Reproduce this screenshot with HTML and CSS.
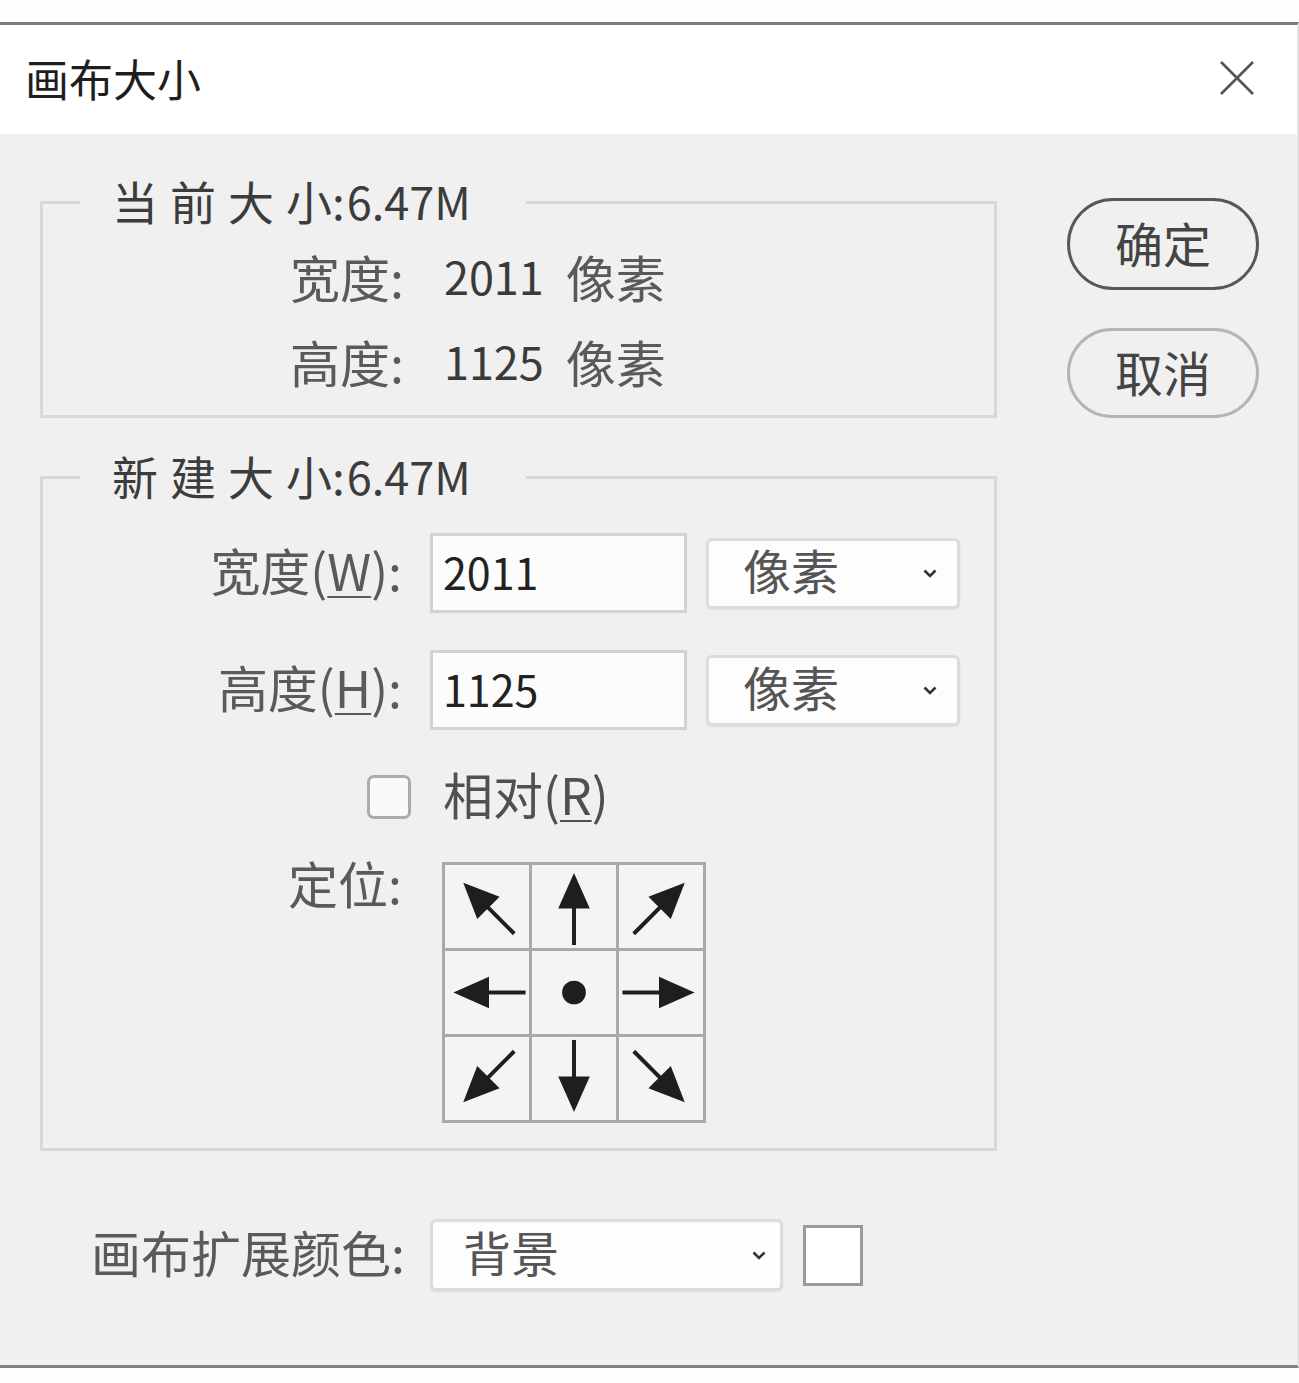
FILE: index.html
```html
<!DOCTYPE html>
<html lang="zh-CN">
<head>
  <meta charset="UTF-8">
  <meta name="viewport" content="width=device-width, initial-scale=1.0">
  <title>画布大小</title>
  <link rel="stylesheet" href="styles.css">
</head>
<body>

  <!-- arrow shape used by the anchor grid -->
  <svg class="defs" width="0" height="0">
    <defs>
      <g id="arrow">
        <polygon points="42,8 26,44 58,44" />
        <rect x="40" y="38" width="4" height="43" />
      </g>
    </defs>
  </svg>

  <div class="top-strip"></div>

  <div class="dialog">
    <!-- Title bar -->
    <div class="titlebar">
      <span class="title">画布大小</span>
      <svg class="close" viewBox="0 0 38 38" width="38" height="38">
        <line x1="3" y1="3" x2="35" y2="35" />
        <line x1="35" y1="3" x2="3" y2="35" />
      </svg>
    </div>

    <div class="content">
      <div class="main">
        <!-- Current size -->
        <fieldset class="group group-current">
          <legend><span class="cjk-wide">当前大</span>小:<span class="size">6.47M</span></legend>
          <div class="info-row">
            <span class="label">宽度:</span>
            <span class="value">2011</span>
            <span class="unit">像素</span>
          </div>
          <div class="info-row">
            <span class="label">高度:</span>
            <span class="value">1125</span>
            <span class="unit">像素</span>
          </div>
        </fieldset>

        <!-- New size -->
        <fieldset class="group group-new">
          <legend><span class="cjk-wide">新建大</span>小:<span class="size">6.47M</span></legend>

          <div class="field-row">
            <label class="field-label" for="width">宽度(<u>W</u>):</label>
            <div class="text-input" id="width">2011</div>
            <div class="select unit-select">
              <span>像素</span>
              <svg class="chevron" viewBox="0 0 14 9" width="14" height="9"><polyline points="1.5,1.5 7,7 12.5,1.5" /></svg>
            </div>
          </div>

          <div class="field-row row-height">
            <label class="field-label" for="height">高度(<u>H</u>):</label>
            <div class="text-input" id="height">1125</div>
            <div class="select unit-select">
              <span>像素</span>
              <svg class="chevron" viewBox="0 0 14 9" width="14" height="9"><polyline points="1.5,1.5 7,7 12.5,1.5" /></svg>
            </div>
          </div>

          <div class="check-row">
            <span class="checkbox"></span>
            <span class="check-label">相对(<u>R</u>)</span>
          </div>

          <div class="anchor-row">
            <span class="field-label anchor-label">定位:</span>
            <div class="anchor-grid">
              <div class="cell"><svg viewBox="0 0 84 84"><use href="#arrow" transform="rotate(-45 42 42)" /></svg></div>
              <div class="cell"><svg viewBox="0 0 84 84"><use href="#arrow" /></svg></div>
              <div class="cell"><svg viewBox="0 0 84 84"><use href="#arrow" transform="rotate(45 42 42)" /></svg></div>
              <div class="cell"><svg viewBox="0 0 84 84"><use href="#arrow" transform="rotate(-90 42 42)" /></svg></div>
              <div class="cell"><svg viewBox="0 0 84 84"><circle cx="42" cy="42" r="12" /></svg></div>
              <div class="cell"><svg viewBox="0 0 84 84"><use href="#arrow" transform="rotate(90 42 42)" /></svg></div>
              <div class="cell"><svg viewBox="0 0 84 84"><use href="#arrow" transform="rotate(-135 42 42)" /></svg></div>
              <div class="cell"><svg viewBox="0 0 84 84"><use href="#arrow" transform="rotate(180 42 42)" /></svg></div>
              <div class="cell"><svg viewBox="0 0 84 84"><use href="#arrow" transform="rotate(135 42 42)" /></svg></div>
            </div>
          </div>
        </fieldset>

        <!-- Extension colour -->
        <div class="color-row">
          <span class="color-label">画布扩展颜色:</span>
          <div class="select color-select">
            <span>背景</span>
            <svg class="chevron" viewBox="0 0 14 9" width="14" height="9"><polyline points="1.5,1.5 7,7 12.5,1.5" /></svg>
          </div>
          <span class="swatch"></span>
        </div>
      </div>

      <!-- Buttons -->
      <div class="buttons">
        <button class="btn btn-ok">确定</button>
        <button class="btn btn-cancel">取消</button>
      </div>
    </div>
  </div>

  <div class="bottom-strip"></div>

</body>
</html>
```

FILE: styles.css
```css
body {
  margin: 0;
  background-color: #fdfdfd;
  font-family: "Noto Sans CJK SC", sans-serif;
  color: #5a5a5a;
}
.defs {
  position: absolute;
}
.top-strip {
  height: 22px;
}
.bottom-strip {
  height: 15px;
}
.dialog {
  border-top: 3px solid #7a7a7a;
  border-bottom: 3px solid #808080;
  border-right: 2px solid #e2e2e2;
}

/* Title bar */
.titlebar {
  height: 109px;
  background-color: #ffffff;
  display: flex;
  align-items: center;
  justify-content: space-between;
  padding: 0 41px 0 25px;
}
.title {
  font-size: 44px;
  line-height: 50px;
  color: #1e1e1e;
  margin-top: -4px;
}
.close {
  stroke: #555555;
  stroke-width: 2.6;
  margin-top: -4px;
}

/* Body */
.content {
  height: 1231px;
  box-sizing: border-box;
  background-color: #f0f0f0;
  padding: 44px 0 0 40px;
  display: flex;
}
.main {
  width: 957px;
}
.group {
  margin: 0;
  min-width: 0;
  border: 3px solid #d8d8d8;
  padding: 0;
}
.group legend {
  margin-left: 37px;
  padding: 0 55px 8px 32px;
  height: 40px;
  font-size: 46px;
  line-height: 40px;
  color: #3c3c3c;
}
.cjk-wide {
  letter-spacing: 12px;
}
.size {
  margin-left: 2px;
  font-size: 45px;
  line-height: 1;
}
.group-current {
  padding: 26px 0 22px;
  display: flex;
  flex-direction: column;
  gap: 29px;
}
.info-row {
  height: 56px;
  display: flex;
  align-items: center;
  padding-left: 247px;
  font-size: 50px;
}
.info-row span {
  padding-bottom: 9px;
}
.info-row .value {
  margin-left: 40px;
  font-size: 45px;
  color: #3a3a3a;
}
.info-row .unit {
  margin-left: 22px;
}

.group-new {
  margin-top: 35px;
  padding: 32px 0 25px;
}
.field-row {
  display: flex;
  align-items: center;
  height: 80px;
}
.row-height {
  margin-top: 37px;
}
.field-label {
  width: 359px;
  margin-right: 28px;
  text-align: right;
  font-size: 50px;
  line-height: 56px;
}
.field-row .field-label {
  padding-bottom: 9px;
}
.field-label u, .check-label u {
  text-decoration-thickness: 2px;
  text-underline-offset: 5px;
}
.text-input {
  width: 257px;
  height: 80px;
  box-sizing: border-box;
  border: 3px solid #d2d2d2;
  background-color: #fcfcfc;
  padding-left: 10px;
  font-size: 43px;
  line-height: 70px;
  color: #222222;
}
.select {
  box-sizing: border-box;
  border: 3px solid #dcdcdc;
  border-radius: 6px;
  background-color: #fdfdfd;
  box-shadow: 0 1px 2px rgba(0, 0, 0, 0.08);
  display: flex;
  align-items: center;
  justify-content: space-between;
  font-size: 48px;
  line-height: 56px;
  color: #555555;
}
.select span {
  margin-top: -8px;
}
.chevron {
  fill: none;
  stroke: #333333;
  stroke-width: 2.6;
}
.unit-select {
  width: 254px;
  height: 71px;
  margin-left: 19px;
  padding: 0 20px 0 34px;
}

.check-row {
  display: flex;
  align-items: center;
  height: 44px;
  margin-top: 45px;
  padding-left: 324px;
}
.checkbox {
  width: 44px;
  height: 44px;
  box-sizing: border-box;
  border: 3px solid #acacac;
  border-radius: 7px;
  background-color: #fafafa;
}
.check-label {
  margin-left: 32px;
  padding-bottom: 8px;
  font-size: 50px;
  line-height: 56px;
  color: #505050;
}

.anchor-row {
  display: flex;
  align-items: flex-start;
  margin-top: 43px;
}
.anchor-label {
  line-height: 40px;
  margin-right: 40px;
}
.anchor-grid {
  display: grid;
  grid-template-columns: repeat(3, 84px);
  grid-template-rows: repeat(3, 83px);
  gap: 3px;
  padding: 3px;
  background-color: #a9a9a9;
}
.cell {
  background-color: #f4f4f4;
}
.cell svg {
  display: block;
  width: 84px;
  height: 83px;
  fill: #1e1e1e;
}

/* Canvas extension colour */
.color-row {
  display: flex;
  align-items: center;
  margin-top: 68px;
}
.color-label {
  width: 365px;
  margin-right: 25px;
  padding-bottom: 8px;
  text-align: right;
  font-size: 50px;
  line-height: 56px;
}
.color-select {
  width: 353px;
  height: 72px;
  padding: 0 14px 0 30px;
}
.swatch {
  width: 60px;
  height: 61px;
  box-sizing: border-box;
  margin-left: 20px;
  border: 3px solid #9a9a9a;
  background-color: #ffffff;
}

/* Buttons */
.buttons {
  display: flex;
  flex-direction: column;
  gap: 38px;
  margin: 20px 0 0 70px;
}
.btn {
  width: 192px;
  height: 92px;
  border-radius: 46px;
  background-color: #f0f0f0;
  font-family: "Noto Sans CJK SC", sans-serif;
  font-size: 48px;
  line-height: 56px;
  color: #444444;
  padding: 0 0 4px;
  cursor: pointer;
}
.btn-ok {
  border: 3px solid #585858;
}
.btn-cancel {
  height: 90px;
  border: 3px solid #b4b4b4;
}
```
